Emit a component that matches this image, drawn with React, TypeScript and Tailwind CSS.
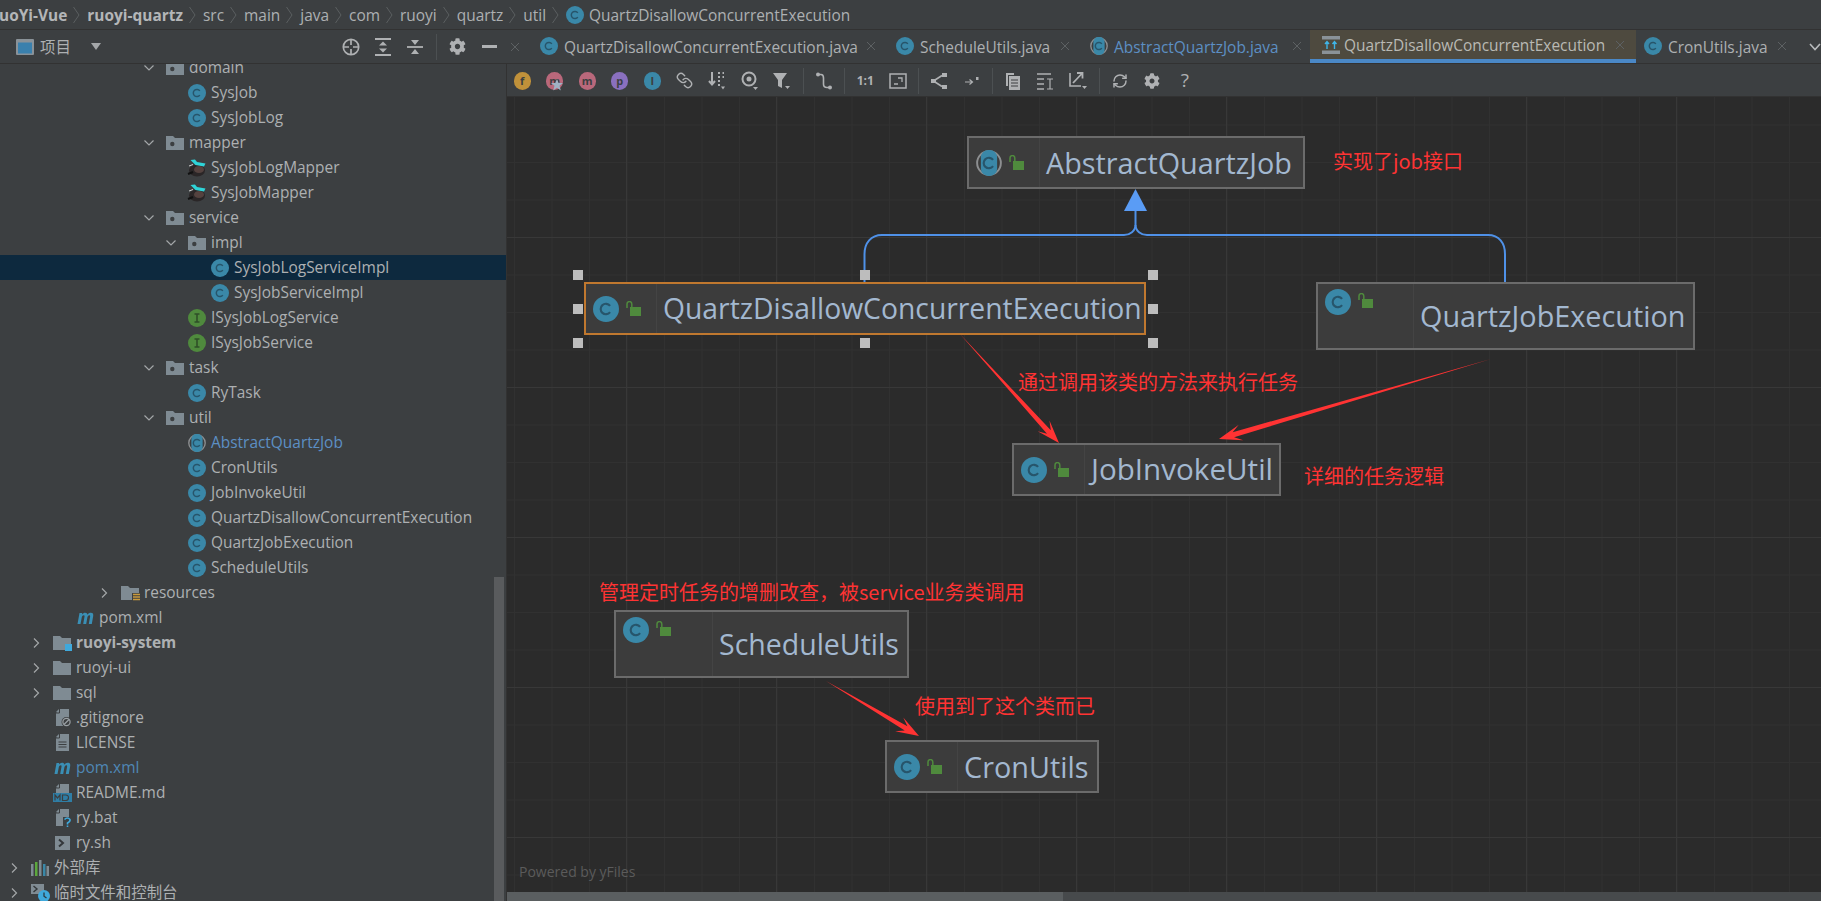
import React from "react";
import { FaCog } from "react-icons/fa";
import { Link, RefreshCw } from "lucide-react";

function ClassIcon({ size = 18, abstract = false }: { size?: number; abstract?: boolean }) {
  return (
    <svg width={size} height={size} viewBox="0 0 16 16" className="shrink-0">
      {abstract ? (
        <>
          <circle cx="8" cy="8" r="7.3" fill="none" stroke="#8d8f91" strokeWidth="1.2" />
          <rect x="3" y="0" width="10" height="16" rx="4.5" fill="#3a88a8" />
        </>
      ) : (
        <circle cx="8" cy="8" r="8" fill="#3a88a8" />
      )}
      <path d="M10.5 6.1A3.2 3.2 0 1 0 10.5 9.9" fill="none" stroke="#27556b" strokeWidth="1.3" />
    </svg>
  );
}

function InterfaceIcon() {
  return (
    <svg width="18" height="18" viewBox="0 0 16 16" className="shrink-0">
      <circle cx="8" cy="8" r="8" fill="#4f8a3d" />
      <path d="M5.8 4.5H10.2M8 4.5V11.5M5.8 11.5H10.2" fill="none" stroke="#2f4f28" strokeWidth="1.4" />
    </svg>
  );
}

function Folder({ dot = false, res = false, mod = false }: { dot?: boolean; res?: boolean; mod?: boolean }) {
  return (
    <svg width="19" height="18" viewBox="0 0 19 18" className="shrink-0">
      <path d="M0 2H7L9 4H18V16H0Z" fill="#7f8b93" />
      {dot && <circle cx="6.3" cy="10" r="2.2" fill="#3c3f41" />}
      {res && (
        <>
          <rect x="11" y="9" width="8" height="9" fill="#3c3f41" />
          <path d="M12 10.5H19M12 13H19M12 15.5H19" stroke="#c99a3c" strokeWidth="1.5" />
        </>
      )}
      {mod && <rect x="12" y="10" width="7" height="7" fill="#3fa9dc" />}
    </svg>
  );
}

function MavenIcon() {
  return (
    <svg width="19" height="16" viewBox="0 0 19 16" className="shrink-0">
      <path
        d="M1.5 14L3.5 3H6.2L6 4.6C7 3.4 8 2.8 9.2 2.8C10.5 2.8 11.2 3.5 11.4 4.7C12.4 3.4 13.6 2.8 14.8 2.8C16.8 2.8 17.6 4 17.2 6.1L15.8 14H12.8L14.1 6.8C14.3 5.7 14 5.2 13.3 5.2C12.5 5.2 11.7 5.9 11.4 7.2L10.2 14H7.2L8.5 6.8C8.7 5.7 8.4 5.2 7.7 5.2C6.9 5.2 6 5.9 5.8 7.2L4.5 14Z"
        fill="#3a8fb5"
      />
    </svg>
  );
}

function MapperIcon() {
  return (
    <svg width="20" height="18" viewBox="0 0 20 18" className="shrink-0">
      <ellipse cx="10" cy="11.5" rx="8" ry="6" fill="#2a2627" />
      <ellipse cx="12" cy="10.5" rx="5" ry="3.6" fill="#54423f" />
      <path d="M1 15L6 13" stroke="#111" strokeWidth="2" />
      <path d="M3.5 1L8 0.5L10 3L18.5 4.5L17 7.5L8.5 6Z" fill="#2fd4d8" />
      <path d="M2 7L6 5.5" stroke="#cfcfcf" strokeWidth="1" />
    </svg>
  );
}

function FileIcon({ kind }: { kind: "git" | "lic" | "md" | "bat" | "sh" }) {
  if (kind === "sh") {
    return (
      <svg width="19" height="18" viewBox="0 0 19 18" className="shrink-0">
        <rect x="2" y="2" width="15" height="14" fill="#7f8b93" />
        <path d="M6 5.5L10 9L6 12.5" fill="none" stroke="#33373a" strokeWidth="2" />
      </svg>
    );
  }
  return (
    <svg width="19" height="18" viewBox="0 0 19 18" className="shrink-0">
      <path d="M7 0H16V17H3V4Z" fill="#7f8b93" />
      <path d="M3 3L6 0V3Z" fill="#7f8b93" />
      <path d="M6.5 0V4H3" fill="none" stroke="#3c3f41" strokeWidth="1" />
      {kind === "lic" && <path d="M5.5 8H13.5M5.5 10.5H13.5M5.5 13H13.5" stroke="#3c3f41" strokeWidth="1.2" />}
      {kind === "git" && (
        <>
          <circle cx="13.5" cy="13" r="5" fill="#3c3f41" />
          <circle cx="13.5" cy="13" r="3.6" fill="none" stroke="#9aa0a4" strokeWidth="1.2" />
          <path d="M11 15.5L16 10.5" stroke="#9aa0a4" strokeWidth="1.2" />
        </>
      )}
      {kind === "md" && (
        <>
          <rect x="0" y="9" width="19" height="9" fill="#2f7ea6" />
          <path d="M2 16.5V11L4.5 14L7 11V16.5M9.5 11V16.5H12.5Q15.5 16.5 15.5 13.7T12.5 11Z" fill="none" stroke="#3c3f41" strokeWidth="1.2" />
        </>
      )}
      {kind === "bat" && (
        <>
          <rect x="10" y="8" width="9" height="10" fill="#3c3f41" />
          <path d="M11.5 10.5Q14.5 7.5 17 10.5Q17.5 12.5 14.5 14V15.5M14.5 16.5V18" fill="none" stroke="#3fa9dc" strokeWidth="1.6" />
        </>
      )}
    </svg>
  );
}

function LibIcon() {
  return (
    <svg width="18" height="16" viewBox="0 0 18 16" className="shrink-0">
      <rect x="0" y="4" width="2.5" height="12" fill="#7f8b93" />
      <rect x="4" y="2" width="2.5" height="14" fill="#5ca83e" />
      <rect x="8" y="0" width="2.5" height="16" fill="#7f8b93" />
      <rect x="12" y="4" width="2.5" height="12" fill="#3a88a8" />
      <rect x="15.5" y="6" width="2.5" height="10" fill="#7f8b93" />
    </svg>
  );
}

function ScratchIcon() {
  return (
    <svg width="19" height="19" viewBox="0 0 19 19" className="shrink-0">
      <rect x="0" y="1" width="13" height="10" fill="#7f8b93" />
      <path d="M2.5 3L6 6L2.5 9" fill="none" stroke="#33373a" strokeWidth="1.4" />
      <circle cx="13" cy="13" r="6" fill="#3fa9dc" />
      <path d="M13 9.5V13.2L15.5 15" fill="none" stroke="#2b3a42" strokeWidth="1.3" />
    </svg>
  );
}

function Chevron({ open }: { open: boolean }) {
  return (
    <svg width="10" height="10" viewBox="0 0 10 10" className="shrink-0">
      {open ? (
        <path d="M0.5 2.5L5 7L9.5 2.5" fill="none" stroke="#a4a7a9" strokeWidth="1.2" />
      ) : (
        <path d="M3 0.5L7.5 5L3 9.5" fill="none" stroke="#a4a7a9" strokeWidth="1.2" />
      )}
    </svg>
  );
}

type RowData = {
  pl: string;
  label: string;
  icon: React.ReactNode;
  chev?: "open" | "closed";
  text?: string;
  sel?: boolean;
};

const C = <ClassIcon />;
const treeRows: RowData[] = [
  { pl: "pl-[144px]", chev: "open", icon: <Folder dot />, label: "domain" },
  { pl: "pl-[166px]", icon: C, label: "SysJob" },
  { pl: "pl-[166px]", icon: C, label: "SysJobLog" },
  { pl: "pl-[144px]", chev: "open", icon: <Folder dot />, label: "mapper" },
  { pl: "pl-[166px]", icon: <MapperIcon />, label: "SysJobLogMapper" },
  { pl: "pl-[166px]", icon: <MapperIcon />, label: "SysJobMapper" },
  { pl: "pl-[144px]", chev: "open", icon: <Folder dot />, label: "service" },
  { pl: "pl-[166px]", chev: "open", icon: <Folder dot />, label: "impl" },
  { pl: "pl-[189px]", icon: C, label: "SysJobLogServiceImpl", sel: true },
  { pl: "pl-[189px]", icon: C, label: "SysJobServiceImpl" },
  { pl: "pl-[166px]", icon: <InterfaceIcon />, label: "ISysJobLogService" },
  { pl: "pl-[166px]", icon: <InterfaceIcon />, label: "ISysJobService" },
  { pl: "pl-[144px]", chev: "open", icon: <Folder dot />, label: "task" },
  { pl: "pl-[166px]", icon: C, label: "RyTask" },
  { pl: "pl-[144px]", chev: "open", icon: <Folder dot />, label: "util" },
  { pl: "pl-[166px]", icon: <ClassIcon abstract />, label: "AbstractQuartzJob", text: "text-[#5c8fc4]" },
  { pl: "pl-[166px]", icon: C, label: "CronUtils" },
  { pl: "pl-[166px]", icon: C, label: "JobInvokeUtil" },
  { pl: "pl-[166px]", icon: C, label: "QuartzDisallowConcurrentExecution" },
  { pl: "pl-[166px]", icon: C, label: "QuartzJobExecution" },
  { pl: "pl-[166px]", icon: C, label: "ScheduleUtils" },
  { pl: "pl-[99px]", chev: "closed", icon: <Folder res />, label: "resources" },
  { pl: "pl-[54px]", icon: <MavenIcon />, label: "pom.xml" },
  { pl: "pl-[31px]", chev: "closed", icon: <Folder mod />, label: "ruoyi-system", text: "font-bold" },
  { pl: "pl-[31px]", chev: "closed", icon: <Folder />, label: "ruoyi-ui" },
  { pl: "pl-[31px]", chev: "closed", icon: <Folder />, label: "sql" },
  { pl: "pl-[31px]", icon: <FileIcon kind="git" />, label: ".gitignore" },
  { pl: "pl-[31px]", icon: <FileIcon kind="lic" />, label: "LICENSE" },
  { pl: "pl-[31px]", icon: <MavenIcon />, label: "pom.xml", text: "text-[#4f87b5]" },
  { pl: "pl-[31px]", icon: <FileIcon kind="md" />, label: "README.md" },
  { pl: "pl-[31px]", icon: <FileIcon kind="bat" />, label: "ry.bat" },
  { pl: "pl-[31px]", icon: <FileIcon kind="sh" />, label: "ry.sh" },
  { pl: "pl-[9px]", chev: "closed", icon: <LibIcon />, label: "外部库" },
  { pl: "pl-[9px]", chev: "closed", icon: <ScratchIcon />, label: "临时文件和控制台" },
];

function TreeRow({ r }: { r: RowData }) {
  return (
    <div className={`flex items-center h-[25px] shrink-0 ${r.pl} ${r.sel ? "bg-[#0d293e]" : ""}`}>
      <span className="w-[22px] shrink-0 flex items-center">
        {r.chev && <Chevron open={r.chev === "open"} />}
      </span>
      <span className="w-[18px] shrink-0 flex items-center justify-center">{r.icon}</span>
      <span className={`ml-[5px] pt-[1px] whitespace-nowrap ${r.text ?? "text-[#adb0b2]"}`}>{r.label}</span>
    </div>
  );
}

function Crumb({ children }: { children: React.ReactNode }) {
  return <span className="whitespace-nowrap pt-[2px]">{children}</span>;
}

function CrumbSep() {
  return (
    <svg width="7" height="22" viewBox="0 0 7 22" className="ml-[6px] mr-[7px] shrink-0">
      <path d="M0.5 3L6 11L0.5 19" fill="none" stroke="#5b5f61" strokeWidth="1" />
    </svg>
  );
}

function CloseX({ className = "" }: { className?: string }) {
  return (
    <svg width="10" height="10" viewBox="0 0 10 10" className={`shrink-0 ${className}`}>
      <path d="M1 1L9 9M9 1L1 9" stroke="#5d6163" strokeWidth="1" />
    </svg>
  );
}

function DiagramTabIcon() {
  return (
    <svg width="18" height="18" viewBox="0 0 18 18" className="shrink-0">
      <rect x="0" y="0" width="18" height="3.5" fill="#8a9298" />
      <rect x="0" y="14.5" width="18" height="3.5" fill="#8a9298" />
      <path d="M5 13V6M3 8L5 5.5L7 8M12.5 13V6M10.5 8L12.5 5.5L14.5 8" fill="none" stroke="#3fb4e6" strokeWidth="1.4" />
    </svg>
  );
}

function Tabs() {
  return (
    <div className="flex items-center flex-1 h-full text-[#adb0b2] min-w-0 overflow-hidden">
      <CloseX className="ml-[3px] mr-[20px]" />
      <div className="flex items-center shrink-0">
        <ClassIcon />
        <span className="ml-[6px] pt-[2px] w-[292px] whitespace-nowrap">QuartzDisallowConcurrentExecution.java</span>
        <CloseX className="ml-[10px]" />
      </div>
      <div className="flex items-center shrink-0 ml-[20px]">
        <ClassIcon />
        <span className="ml-[6px] pt-[2px] w-[132px] whitespace-nowrap">ScheduleUtils.java</span>
        <CloseX className="ml-[8px]" />
      </div>
      <div className="flex items-center shrink-0 ml-[20px]">
        <ClassIcon abstract />
        <span className="ml-[6px] pt-[2px] w-[168px] whitespace-nowrap text-[#5c8fc4]">AbstractQuartzJob.java</span>
        <CloseX className="ml-[10px]" />
      </div>
      <div className="flex items-center shrink-0 ml-[8px] pl-[12px] pr-[11px] h-full bg-[#4e4a3f] border-b-[4px] border-[#4a88c7] text-[#b9b9b4] w-[326px]">
        <DiagramTabIcon />
        <span className="ml-[4px] pt-[2px] w-[263px] whitespace-nowrap">QuartzDisallowConcurrentExecution</span>
        <CloseX className="ml-[8px]" />
      </div>
      <div className="flex items-center shrink-0 ml-[8px]">
        <ClassIcon />
        <span className="ml-[6px] pt-[2px] w-[99px] whitespace-nowrap">CronUtils.java</span>
        <CloseX className="ml-[10px]" />
      </div>
      <svg width="12" height="8" viewBox="0 0 12 8" className="ml-[22px] shrink-0">
        <path d="M1 1L6 6.5L11 1" fill="none" stroke="#b8bbbd" strokeWidth="1.6" />
      </svg>
    </div>
  );
}

function Letter({ l, bg, fg = "text-[#3c3f41]" }: { l: string; bg: string; fg?: string }) {
  return (
    <span className={`w-[17px] h-[18px] rounded-full flex items-center justify-center text-[11px] leading-none font-bold ${bg} ${fg}`}>
      {l}
    </span>
  );
}

function Slot({ children }: { children: React.ReactNode }) {
  return <span className="w-[32.5px] h-full shrink-0 flex items-center justify-center">{children}</span>;
}

function Sep() {
  return <span className="mx-[4px] w-px h-[26px] bg-[#4c5052] shrink-0" />;
}

const sv = { fill: "none", stroke: "#afb1b3", strokeWidth: 1.6 } as const;

function Toolbar() {
  return (
    <div className="flex items-center h-[33px] pt-[1px] bg-[#3c3f41] border-b border-[#323232] -ml-px shrink-0">
      <Slot><Letter l="f" bg="bg-[#c0913a]" /></Slot>
      <Slot>
        <span className="relative">
          <Letter l="m" bg="bg-[#b9687b]" />
          <svg width="12" height="12" viewBox="0 0 12 12" className="absolute left-[5px] top-[7px]">
            <path d="M6 0L7.6 4H12L8.5 6.8L9.8 11.5L6 8.8L2.2 11.5L3.5 6.8L0 4H4.4Z" fill="#9fb2c4" />
          </svg>
        </span>
      </Slot>
      <Slot><Letter l="m" bg="bg-[#b9687b]" /></Slot>
      <Slot><Letter l="p" bg="bg-[#8a70bf]" /></Slot>
      <Slot><Letter l="I" bg="bg-[#3a88a8]" /></Slot>
      <Slot><Link size={17} color="#afb1b3" strokeWidth={2} className="-scale-x-100" /></Slot>
      <Slot>
        <svg width="18" height="20" viewBox="0 0 18 20">
          <path d="M4 1V13M1 10L4 13.5L7 10" fill="none" stroke="#afb1b3" strokeWidth="2" />
          <path d="M10 2H12M10 6H12M10 10H12M14.5 2H16M14.5 6H16M10 14H12" fill="none" stroke="#afb1b3" strokeWidth="2" />
          <path d="M13 15.5H17L15 18.5Z" fill="#afb1b3" />
        </svg>
      </Slot>
      <Slot>
        <svg width="20" height="20" viewBox="0 0 20 20">
          <circle cx="9" cy="8" r="6.5" fill="none" stroke="#afb1b3" strokeWidth="2" />
          <circle cx="9" cy="8" r="2.5" fill="#afb1b3" />
          <path d="M13 16H18L15.5 19Z" fill="#afb1b3" />
        </svg>
      </Slot>
      <Slot>
        <svg width="20" height="20" viewBox="0 0 20 20">
          <path d="M1 2H15L10 9V17L6 15V9Z" fill="#afb1b3" />
          <path d="M13 15H18L15.5 18Z" fill="#afb1b3" />
        </svg>
      </Slot>
      <Sep />
      <Slot>
        <svg width="18" height="20" viewBox="0 0 18 20">
          <circle cx="3" cy="3.5" r="2" fill="#afb1b3" />
          <circle cx="15" cy="16.5" r="2" fill="#afb1b3" />
          <path d="M3 3.5H6C8.5 3.5 8.5 5.5 8.5 7V13C8.5 15 9.5 16.5 12 16.5H15" fill="none" stroke="#afb1b3" strokeWidth="1.6" />
        </svg>
      </Slot>
      <Sep />
      <Slot><span className="text-[#afb1b3] text-[12px] font-bold leading-none">1:1</span></Slot>
      <Slot>
        <svg width="18" height="18" viewBox="0 0 18 18">
          <rect x="1" y="2" width="16" height="14" fill="none" stroke="#afb1b3" strokeWidth="1.5" />
          <path d="M9 6H13V10M5 12H9" fill="none" stroke="#afb1b3" strokeWidth="1.3" />
        </svg>
      </Slot>
      <Sep />
      <Slot>
        <svg width="18" height="18" viewBox="0 0 18 18">
          <rect x="12" y="1" width="5" height="4" fill="#afb1b3" />
          <rect x="12" y="13" width="5" height="4" fill="#afb1b3" />
          <rect x="1" y="7" width="5" height="4" fill="#afb1b3" />
          <path d="M5 8L12 3.5M5 10L12 14.5" {...sv} />
        </svg>
      </Slot>
      <Slot>
        <svg width="16" height="14" viewBox="0 0 16 14">
          <path d="M1 8H8M5.5 5.5L8.5 8L5.5 10.5" fill="none" stroke="#afb1b3" strokeWidth="1.2" />
          <rect x="12" y="3" width="2.5" height="3" fill="#afb1b3" />
        </svg>
      </Slot>
      <Sep />
      <Slot>
        <svg width="16" height="18" viewBox="0 0 16 18">
          <path d="M1 1H9V3H3V14H1Z" fill="#afb1b3" />
          <rect x="4" y="4" width="11" height="14" fill="#afb1b3" />
          <path d="M6 8H13M6 11H13M6 14H13" stroke="#3c3f41" strokeWidth="1" />
        </svg>
      </Slot>
      <Slot>
        <svg width="18" height="18" viewBox="0 0 18 18">
          <path d="M0 2H14M0 7H7M0 12H7M0 17H7" stroke="#afb1b3" strokeWidth="1.6" />
          <path d="M10 7H16M13 7V17M10 17H16" fill="none" stroke="#afb1b3" strokeWidth="1.2" />
        </svg>
      </Slot>
      <Slot>
        <svg width="20" height="20" viewBox="0 0 20 20">
          <path d="M2 2V15H13" {...sv} />
          <path d="M5 12L14 2.5M9 2H14.5V7.5" fill="none" stroke="#afb1b3" strokeWidth="1.8" />
          <path d="M14 15H19L16.5 18Z" fill="#afb1b3" />
        </svg>
      </Slot>
      <Sep />
      <Slot><RefreshCw size={16} color="#afb1b3" strokeWidth={2.2} /></Slot>
      <Slot><FaCog size={16} color="#afb1b3" /></Slot>
      <Slot><span className="text-[#afb1b3] text-[19px] leading-none">?</span></Slot>
    </div>
  );
}

function Lock() {
  return (
    <svg width="15" height="15" viewBox="0 0 15 15" className="shrink-0">
      <rect x="4" y="6" width="11" height="9" fill="#4f8a3d" />
      <path d="M1 7V3A2.2 2.2 0 0 1 5.8 3V6" fill="none" stroke="#4f8a3d" strokeWidth="1.5" />
    </svg>
  );
}

function UmlNode({
  pos,
  cell,
  label,
  abstract = false,
  top = false,
  selected = false,
  text,
}: {
  pos: string;
  cell: string;
  label: string;
  abstract?: boolean;
  top?: boolean;
  selected?: boolean;
  text: string;
}) {
  return (
    <div className={`absolute flex bg-[#3c3c3c] border-2 ${selected ? "border-[#c0782f]" : "border-[#6b6b6b]"} ${pos}`}>
      <div className={`flex gap-[7px] pl-[7px] shrink-0 ${cell} ${top ? "items-start pt-[5px]" : "items-center"}`}>
        <ClassIcon size={26} abstract={abstract} />
        <span className={top ? "mt-[4px]" : ""}><Lock /></span>
      </div>
      <div className={`flex-1 flex items-center border-l border-[#444444] text-[#a3b8d0] whitespace-nowrap ${text}`}>
        {label}
      </div>
    </div>
  );
}

function arrowPoints(x1: number, y1: number, x2: number, y2: number) {
  const dx = x2 - x1;
  const dy = y2 - y1;
  const len = Math.hypot(dx, dy);
  const ux = dx / len;
  const uy = dy / len;
  const nx = -uy;
  const ny = ux;
  const neck = 15;
  const back = 23;
  const sw = 2.6;
  const hw = 8;
  const pts = [
    [x1, y1],
    [x2 - ux * neck + nx * sw, y2 - uy * neck + ny * sw],
    [x2 - ux * back + nx * hw, y2 - uy * back + ny * hw],
    [x2, y2],
    [x2 - ux * back - nx * hw, y2 - uy * back - ny * hw],
    [x2 - ux * neck - nx * sw, y2 - uy * neck - ny * sw],
  ];
  return pts.map((p) => p.join(",")).join(" ");
}

const handleClasses = [
  "left-[66px] top-[173px]",
  "left-[353px] top-[173px]",
  "left-[641px] top-[173px]",
  "left-[66px] top-[207px]",
  "left-[641px] top-[207px]",
  "left-[66px] top-[241px]",
  "left-[353px] top-[241px]",
  "left-[641px] top-[241px]",
];

function Note({ pos, children }: { pos: string; children: React.ReactNode }) {
  return (
    <div className={`absolute whitespace-nowrap text-[#ff3333] text-[20px] leading-[28px] font-['Noto_Sans_CJK_SC',sans-serif] ${pos}`}>
      {children}
    </div>
  );
}

function Canvas() {
  return (
    <div className="relative flex-1 overflow-hidden bg-[#2b2b2b] bg-[linear-gradient(#383838_1px,transparent_1px),linear-gradient(90deg,#383838_1px,transparent_1px),linear-gradient(#313131_1px,transparent_1px),linear-gradient(90deg,#313131_1px,transparent_1px)] bg-[size:150px_150px,150px_150px,37.5px_37.5px,37.5px_37.5px] bg-[position:0_140px,119px_0,0_27.5px,7px_0]">
      <UmlNode pos="left-[460px] top-[39px] w-[338px] h-[53px]" cell="w-[70px]" label="AbstractQuartzJob" abstract text="pl-[6px] text-[28.8px]" />
      <UmlNode pos="left-[77px] top-[185px] w-[562px] h-[53px]" cell="w-[70px]" label="QuartzDisallowConcurrentExecution" selected text="pl-[6px] text-[28.3px]" />
      <UmlNode pos="left-[809px] top-[185px] w-[379px] h-[68px]" cell="w-[95px]" label="QuartzJobExecution" top text="pl-[6px] text-[28.8px]" />
      <UmlNode pos="left-[505px] top-[346px] w-[269px] h-[53px]" cell="w-[70px]" label="JobInvokeUtil" text="pl-[6px] text-[29.6px]" />
      <UmlNode pos="left-[107px] top-[513px] w-[295px] h-[68px]" cell="w-[96px]" label="ScheduleUtils" top text="pl-[6px] text-[28.5px]" />
      <UmlNode pos="left-[378px] top-[643px] w-[214px] h-[53px]" cell="w-[70px]" label="CronUtils" text="pl-[6px] text-[28.8px]" />

      <svg className="absolute inset-0 w-full h-full pointer-events-none" viewBox="507 97 1314 795" preserveAspectRatio="none">
        <path
          d="M1135.5 210V225C1135.5 231 1130 235 1124 235H882C871 235 864.5 243 864.5 254V282"
          fill="none"
          stroke="#4f91e8"
          strokeWidth="2"
        />
        <path
          d="M1135.5 225C1135.5 231 1141 235 1147 235H1488C1499 235 1505 243 1505 254V282"
          fill="none"
          stroke="#4f91e8"
          strokeWidth="2"
        />
        <path d="M1135.5 189L1147 211H1124Z" fill="#5a9cf5" />
        <polygon points={arrowPoints(960, 334, 1059, 443)} fill="#ff3333" />
        <polygon points={arrowPoints(1491, 359, 1219, 439)} fill="#ff3333" />
        <polygon points={arrowPoints(826, 681, 919, 736)} fill="#ff3333" />
      </svg>

      {handleClasses.map((h) => (
        <span key={h} className={`absolute w-[10px] h-[10px] bg-[#bdbdbd] ${h}`} />
      ))}

      <Note pos="left-[826px] top-[50px]">实现了job接口</Note>
      <Note pos="left-[511px] top-[271px]">通过调用该类的方法来执行任务</Note>
      <Note pos="left-[797px] top-[365px]">详细的任务逻辑</Note>
      <Note pos="left-[92px] top-[481px]">{"管理定时任务的增删改查\uFF0C被service业务类调用"}</Note>
      <Note pos="left-[408px] top-[595px]">使用到了这个类而已</Note>

      <div className="absolute left-[12px] top-[765px] text-[#5b5b5b] text-[14px] leading-[20px] whitespace-nowrap">Powered by yFiles</div>
    </div>
  );
}

export default function App() {
  return (
    <div className="w-[1821px] h-[901px] overflow-hidden flex flex-col bg-[#3c3f41] text-[15.45px] font-['Open_Sans','Noto_Sans_CJK_SC',sans-serif]">
      <div className="h-[30px] shrink-0 flex items-center border-b border-[#323232] text-[#adb0b2] overflow-hidden">
        <span className="-ml-[8px] pt-[2px] font-bold whitespace-nowrap text-[#b4b6b8]">ruoYi-Vue</span>
        <CrumbSep />
        <span className="pt-[2px] font-bold whitespace-nowrap text-[#b4b6b8]">ruoyi-quartz</span>
        <CrumbSep />
        <Crumb>src</Crumb>
        <CrumbSep />
        <Crumb>main</Crumb>
        <CrumbSep />
        <Crumb>java</Crumb>
        <CrumbSep />
        <Crumb>com</Crumb>
        <CrumbSep />
        <Crumb>ruoyi</Crumb>
        <CrumbSep />
        <Crumb>quartz</Crumb>
        <CrumbSep />
        <Crumb>util</Crumb>
        <CrumbSep />
        <ClassIcon />
        <span className="ml-[5px] pt-[2px] whitespace-nowrap">QuartzDisallowConcurrentExecution</span>
      </div>

      <div className="h-[34px] shrink-0 flex items-center border-b border-[#323232]">
        <div className="w-[507px] h-full shrink-0 flex items-center pl-[16px] pr-[2px] text-[#adb0b2]">
          <svg width="18" height="16" viewBox="0 0 18 16" className="shrink-0">
            <rect x="0" y="0" width="18" height="16" rx="1" fill="#8a9298" />
            <rect x="2" y="3.5" width="14" height="11" fill="#3a80ad" />
          </svg>
          <span className="ml-[6px] pt-[2px]">项目</span>
          <svg width="10" height="7" viewBox="0 0 10 7" className="ml-[20px] shrink-0">
            <path d="M0 0H10L5 7Z" fill="#a4a7a9" />
          </svg>
          <div className="ml-auto flex items-center h-full">
            <span className="w-[32px] flex justify-center">
              <svg width="18" height="18" viewBox="0 0 18 18">
                <circle cx="9" cy="9" r="7.7" fill="none" stroke="#afb1b3" strokeWidth="1.7" />
                <path d="M9 2V7M9 11V16M2 9H7M11 9H16" stroke="#afb1b3" strokeWidth="1.7" />
              </svg>
            </span>
            <span className="w-[32px] flex justify-center">
              <svg width="16" height="18" viewBox="0 0 16 18">
                <path d="M0 1H16M0 17H16" stroke="#afb1b3" strokeWidth="1.8" />
                <path d="M8 3.5L12 7.5H4ZM8 14.5L12 10.5H4Z" fill="#afb1b3" />
              </svg>
            </span>
            <span className="w-[32px] flex justify-center">
              <svg width="16" height="18" viewBox="0 0 16 18">
                <path d="M0 9H16" stroke="#afb1b3" strokeWidth="1.8" />
                <path d="M8 7L12 2H4ZM8 11L12 16H4Z" fill="#afb1b3" />
              </svg>
            </span>
            <span className="ml-[5px] mr-[4px] w-px h-[26px] bg-[#4c5052]" />
            <span className="w-[32px] flex justify-center"><FaCog size={17} color="#afb1b3" /></span>
            <span className="w-[32px] flex justify-center"><span className="w-[15px] h-[3px] bg-[#afb1b3]" /></span>
          </div>
        </div>
        <Tabs />
      </div>

      <div className="flex-1 flex min-h-0">
        <div className="relative w-[507px] shrink-0 overflow-hidden border-r border-[#323232]">
          <div className="flex flex-col -mt-[9px] text-[#adb0b2]">
            {treeRows.map((r, i) => (
              <TreeRow key={i} r={r} />
            ))}
          </div>
          <span className="absolute right-[2px] top-[513px] bottom-0 w-[10px] bg-[#595b5d]" />
        </div>
        <div className="flex-1 flex flex-col min-w-0">
          <Toolbar />
          <Canvas />
          <div className="h-[9px] shrink-0 flex bg-[#474a4c]">
            <span className="w-[556px] bg-[#5a5e60]" />
          </div>
        </div>
      </div>
    </div>
  );
}
